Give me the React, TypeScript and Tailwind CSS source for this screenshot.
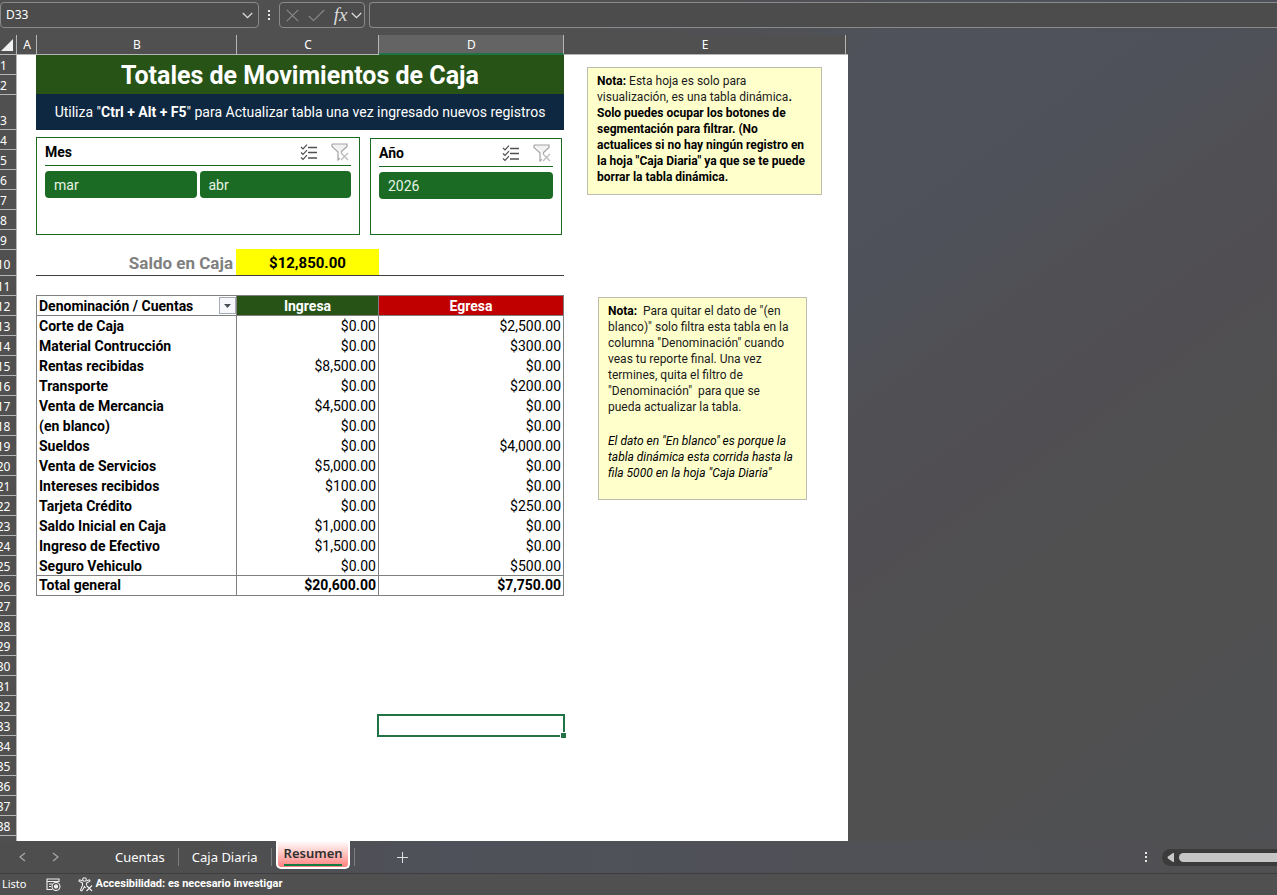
import { useState } from "react";

const UI = "font-['Noto_Sans','Open_Sans',sans-serif]";
const CELL = "font-['Roboto','Liberation_Sans',sans-serif]";

const columns = [
  { name: "A", width: "w-[20px]" },
  { name: "B", width: "w-[200px]" },
  { name: "C", width: "w-[142px]" },
  { name: "D", width: "w-[185px]" },
  { name: "E", width: "w-[282px]" },
];

const rowNumbers = Array.from({ length: 39 }, (_, i) => i + 1);

const cuentas = [
  ["Corte de Caja", "$0.00", "$2,500.00"],
  ["Material Contrucción", "$0.00", "$300.00"],
  ["Rentas recibidas", "$8,500.00", "$0.00"],
  ["Transporte", "$0.00", "$200.00"],
  ["Venta de Mercancia", "$4,500.00", "$0.00"],
  ["(en blanco)", "$0.00", "$0.00"],
  ["Sueldos", "$0.00", "$4,000.00"],
  ["Venta de Servicios", "$5,000.00", "$0.00"],
  ["Intereses recibidos", "$100.00", "$0.00"],
  ["Tarjeta Crédito", "$0.00", "$250.00"],
  ["Saldo Inicial en Caja", "$1,000.00", "$0.00"],
  ["Ingreso de Efectivo", "$1,500.00", "$0.00"],
  ["Seguro Vehiculo", "$0.00", "$500.00"],
];

const rowHeight = (n: number) => {
  if (n === 3) return "h-[35px] items-end";
  if (n === 10) return "h-[26px] items-center pt-[3px]";
  return "h-[20px] items-end";
};

const Chevron = () => (
  <svg width="11" height="7" viewBox="0 0 11 7" fill="none" stroke="currentColor" strokeWidth="1.3">
    <path d="M0.8 1 L5.5 5.6 L10.2 1" />
  </svg>
);

const MultiSelectIcon = () => (
  <svg width="18" height="18" viewBox="0 0 18 18" fill="none" stroke="#505050" strokeWidth="1.2">
    <path d="M1 4 L3 6 L7 1.6 M1 9.5 L3 11.5 L7 7.1 M1 14.5 L3 16.5 L7 12.1" />
    <path d="M8 4.5 H17 M8 9.5 H17 M8 15 H17" strokeWidth="1.4" />
  </svg>
);

const ClearFilterIcon = () => (
  <svg width="18" height="18" viewBox="0 0 18 18" fill="none" stroke="#a3a3a3" strokeWidth="1.2">
    <path d="M1 1 H16 V3.5 L10.5 8.5 V10 M1 1 V3.5 L7 8.8 V17 L9 15.4" fill="#f1f1f1" />
    <path d="M10 10 L17 17 M17 10 L10 17" stroke="#bdbdbd" strokeWidth="1.4" />
  </svg>
);

const Slicer = ({ title, items, className }: { title: string; items: string[]; className: string }) => (
  <section className={`border border-[#1b6a22] bg-white px-[8px] ${className}`}>
    <header className="flex h-[28px] items-center border-b border-[#1b6a22] pr-[2px]">
      <h2 className="flex-1 text-[14px] font-bold leading-[20px]">{title}</h2>
      <button aria-label={`Selección múltiple ${title}`} className="mr-[13px]">
        <MultiSelectIcon />
      </button>
      <button aria-label={`Borrar filtro ${title}`}>
        <ClearFilterIcon />
      </button>
    </header>
    <div className="mt-[5px] flex gap-[3px]">
      {items.map((item) => (
        <button
          key={item}
          className="h-[27px] flex-1 rounded-[4px] bg-[#1b6b24] px-[9px] pt-[2px] text-left text-[14px] text-[#e8f3e6]"
        >
          {item}
        </button>
      ))}
    </div>
  </section>
);

const FormulaBar = () => (
  <div className="flex h-[35px] shrink-0 items-start pt-[2px] text-[#dcdcdc]">
    <div className="flex h-[26px] w-[259px] items-center rounded-[4px] border border-[#8a8a8a] bg-[#4c4c4c] pr-[5px]">
      <input
        aria-label="Cuadro de nombres"
        defaultValue="D33"
        className="min-w-0 flex-1 bg-transparent pl-[5px] text-[12px] text-white outline-none"
      />
      <button aria-label="Abrir nombres">
        <Chevron />
      </button>
    </div>
    <div className="flex h-[26px] w-[20px] flex-col items-center justify-center gap-[2px]">
      <i className="h-[2px] w-[2px] bg-[#e6e6e6]" />
      <i className="h-[2px] w-[2px] bg-[#e6e6e6]" />
      <i className="h-[2px] w-[2px] bg-[#e6e6e6]" />
    </div>
    <div className="flex h-[26px] w-[86px] items-center rounded-[4px] border border-[#8a8a8a] bg-[#4c4c4c] pl-[6px]">
      <button aria-label="Cancelar" className="text-[#8c8c8c]">
        <svg width="13" height="13" viewBox="0 0 13 13" stroke="currentColor" strokeWidth="1.1">
          <path d="M0.8 0.8 L12.2 12.2 M12.2 0.8 L0.8 12.2" />
        </svg>
      </button>
      <button aria-label="Introducir" className="ml-[9px] text-[#8c8c8c]">
        <svg width="17" height="13" viewBox="0 0 17 13" fill="none" stroke="currentColor" strokeWidth="1.1">
          <path d="M0.8 7 L5.5 11.6 L16.2 1" />
        </svg>
      </button>
      <button
        aria-label="Insertar función"
        className="ml-[8px] w-[15px] font-['Liberation_Serif',serif] text-[19px] italic leading-[22px]"
      >
        fx
      </button>
      <button aria-label="Más funciones" className="ml-[3px]">
        <Chevron />
      </button>
    </div>
    <input
      aria-label="Barra de fórmulas"
      className="ml-[4px] h-[26px] min-w-0 flex-1 rounded-l-[4px] border border-r-0 border-[#8a8a8a] bg-[#4c4c4c] px-2 text-[12px] text-white outline-none"
    />
  </div>
);

const ColumnHeaders = () => (
  <div className="flex h-[20px] shrink-0 text-[12px] leading-[19px] text-white">
    <button
      aria-label="Seleccionar todo"
      className="flex w-[17px] items-end justify-end border-r border-b border-[#b5b5b5] bg-[#505050] pr-[3px] pb-[3px]"
    >
      <svg width="12" height="12" viewBox="0 0 12 12" fill="#f2f2f2">
        <path d="M12 0 V12 H0 Z" />
      </svg>
    </button>
    {columns.map(({ name, width }) => (
      <div
        key={name}
        className={`${width} border-r border-[#b5b5b5] pl-[1px] text-center ${
          name === "D" ? "border-b-2 border-b-[#217346] bg-[#646464]" : "border-b bg-[#505050]"
        }`}
      >
        {name}
      </div>
    ))}
    <div className="w-[2px] border-b border-[#b5b5b5] bg-[#505050]" />
  </div>
);

const RowHeaders = () => (
  <div className="w-[17px] shrink-0 overflow-hidden border-r border-[#b5b5b5] bg-[#505050] text-[12px] leading-[17px] text-white">
    {rowNumbers.map((n) => (
      <div key={n} className={`flex justify-end border-b border-[#b5b5b5] ${rowHeight(n)}`}>
        <span className="w-[25px] shrink-0 text-center">{n}</span>
      </div>
    ))}
  </div>
);

const PivotTable = () => (
  <table className="mt-[19px] w-full table-fixed border-separate border-spacing-0 text-[14px] leading-[19px]">
    <thead>
      <tr className="h-[21px]">
        <th className="w-[201px] border border-[#808080] p-0 pl-[2px] text-left font-bold">
          <div className="flex h-[19px] items-center justify-between">
            <span className="pt-[2px]">Denominación / Cuentas</span>
            <button
              aria-label="Filtrar denominación"
              className="flex h-[17px] w-[17px] items-center justify-center border border-[#a5acb5] bg-[#f5f7fa]"
            >
              <svg width="7" height="4" viewBox="0 0 7 4" fill="#4a4f57">
                <path d="M0 0 H7 L3.5 4 Z" />
              </svg>
            </button>
          </div>
        </th>
        <th className="w-[142px] border-y border-r border-[#808080] bg-[#275317] p-0 pt-[2px] leading-[17px] text-white">
          Ingresa
        </th>
        <th className="w-[185px] border-y border-r border-[#808080] bg-[#c00000] p-0 pt-[2px] leading-[17px] text-white">
          Egresa
        </th>
      </tr>
    </thead>
    <tbody>
      {cuentas.map(([cuenta, ingresa, egresa]) => (
        <tr key={cuenta} className="h-[20px] last:leading-[18px] last:*:border-b last:*:pt-[1px]">
          <th scope="row" className="border-x border-[#808080] p-0 pl-[2px] text-left font-bold">
            {cuenta}
          </th>
          <td className="border-r border-[#808080] p-0 pr-[2px] text-right">{ingresa}</td>
          <td className="border-r border-[#808080] p-0 pr-[2px] text-right">{egresa}</td>
        </tr>
      ))}
    </tbody>
    <tfoot>
      <tr className="h-[20px] font-bold">
        <th scope="row" className="border-x border-b border-[#808080] p-0 pl-[2px] text-left">
          Total general
        </th>
        <td className="border-r border-b border-[#808080] p-0 pr-[2px] text-right">$20,600.00</td>
        <td className="border-r border-b border-[#808080] p-0 pr-[2px] text-right">$7,750.00</td>
      </tr>
    </tfoot>
  </table>
);

const Notes = () => (
  <aside className="flex flex-col items-start text-[12px] leading-[16px] text-[#1a1a1a]">
    <p className="mt-[12px] ml-[23px] h-[128px] w-[235px] border border-[#bcbcb0] bg-[#ffffcc] px-[9px] pt-[5px] whitespace-nowrap">
      <b className="text-black">Nota:</b> Esta hoja es solo para
      <br />
      visualización, es una tabla dinámica
      <b className="text-black">
        .<br />
        Solo puedes ocupar los botones de
        <br />
        segmentación para filtrar. (No
        <br />
        actualices si no hay ningún registro en
        <br />
        la hoja "Caja Diaria" ya que se te puede
        <br />
        borrar la tabla dinámica.
      </b>
    </p>
    <div className="mt-[102px] ml-[34px] h-[203px] w-[209px] border border-[#bcbcb0] bg-[#ffffcc] px-[9px] pt-[5px] whitespace-nowrap">
      <p>
        <b className="text-black">Nota:</b>&nbsp; Para quitar el dato de "(en
        <br />
        blanco)" solo filtra esta tabla en la
        <br />
        columna "Denominación" cuando
        <br />
        veas tu reporte final. Una vez
        <br />
        termines, quita el filtro de
        <br />
        "Denominación"&nbsp; para que se
        <br />
        pueda actualizar la tabla.
      </p>
      <p className="mt-[18px] italic text-black">
        El dato en "En blanco" es porque la
        <br />
        tabla dinámica esta corrida hasta la
        <br />
        fila 5000 en la hoja "Caja Diaria"
      </p>
    </div>
  </aside>
);

const SheetTabs = () => {
  const [active, setActive] = useState("Resumen");

  return (
    <nav className="flex h-[32px] shrink-0 items-center bg-linear-to-r from-[#4e4e4e] from-15% via-[#4f515a] via-35% to-[#505052] text-[13px] text-white">
      <button aria-label="Hoja anterior" className="ml-[19px] text-[#a8a8a8]">
        <svg width="7" height="10" viewBox="0 0 7 10" fill="none" stroke="currentColor" strokeWidth="1.2">
          <path d="M6 1 L1 5 L6 9" />
        </svg>
      </button>
      <button aria-label="Hoja siguiente" className="ml-[26px] text-[#a8a8a8]">
        <svg width="7" height="10" viewBox="0 0 7 10" fill="none" stroke="currentColor" strokeWidth="1.2">
          <path d="M1 1 L6 5 L1 9" />
        </svg>
      </button>
      <div className="ml-[43px] flex h-full items-center">
        {["Cuentas", "Caja Diaria", "Resumen"].map((tab) =>
          tab === active ? (
            <button
              key={tab}
              onClick={() => setActive(tab)}
              className="ml-[4px] h-[28px] w-[74px] self-start rounded-b-[5px] border-x-2 border-b-2 border-white bg-linear-to-b from-white to-[#ff8080] px-[6px] font-semibold text-[#303030]"
            >
              <span className="block border-b-2 border-[#107c41] leading-[21px]">{tab}</span>
            </button>
          ) : (
            <button
              key={tab}
              onClick={() => setActive(tab)}
              className="h-[18px] border-r border-[#7d7d7d] px-[13px] leading-[18px]"
            >
              {tab}
            </button>
          )
        )}
        <span className="ml-[4px] h-[18px] border-r border-[#7d7d7d]" />
      </div>
      <button aria-label="Hoja nueva" className="ml-[42px] text-[#e0e0e0]">
        <svg width="11" height="11" viewBox="0 0 11 11" stroke="currentColor" strokeWidth="1">
          <path d="M5.5 0 V11 M0 5.5 H11" />
        </svg>
      </button>
      <div className="ml-auto flex w-[132px] items-center">
        <div className="flex flex-col gap-[2px]">
          <i className="h-[2px] w-[2px] bg-[#e6e6e6]" />
          <i className="h-[2px] w-[2px] bg-[#e6e6e6]" />
          <i className="h-[2px] w-[2px] bg-[#e6e6e6]" />
        </div>
        <div className="ml-[15px] flex h-[17px] flex-1 items-center rounded-l-full bg-[#3b3b3b] pl-[5px]">
          <button aria-label="Desplazar a la izquierda">
            <svg width="7" height="9" viewBox="0 0 7 9" fill="#c8c8c8">
              <path d="M7 0 V9 L6 9 L1 5.5 Q0 4.5 1 3.5 L6 0 Z" />
            </svg>
          </button>
          <div className="ml-[5px] h-[9px] flex-1 rounded-l-full bg-[#c6c6c6]" />
        </div>
      </div>
    </nav>
  );
};

const StatusBar = () => (
  <footer className="flex h-[22px] shrink-0 items-center border-t border-[#3d3d3d] bg-[#505050] pl-[2px] text-[11px] text-white">
    <span>Listo</span>
    <button aria-label="Grabar macro" className="ml-[19px]">
      <svg width="15" height="13" viewBox="0 0 15 13" fill="none" stroke="#f0f0f0" strokeWidth="1.1">
        <path d="M6 11.5 H1 V1 H13 V4 M1 3.5 H13 M3 6 H6 M3 8.5 H5" />
        <circle cx="10" cy="8.5" r="4" />
        <circle cx="10" cy="8.5" r="1.6" fill="#f0f0f0" />
      </svg>
    </button>
    <button className="ml-[17px] flex items-center gap-[3px] font-['Roboto',sans-serif] font-bold">
      <svg width="15" height="15" viewBox="0 0 15 15" fill="none" stroke="#f0f0f0" strokeWidth="1.1">
        <circle cx="6.5" cy="2.5" r="1.8" />
        <path d="M4.5 4 L1.8 2.8 Q0.6 3.2 1.3 4.4 L4.5 6 V8.5 L2.5 13 Q3 14.4 4.2 13.5 L6.5 9.5 L7.5 11 M8.5 4 L11.2 2.8 Q12.4 3.2 11.7 4.4 L8.5 6 V8" />
        <path d="M8.5 8.5 L14 14 M14 8.5 L8.5 14" />
      </svg>
      Accesibilidad: es necesario investigar
    </button>
  </footer>
);

export default function App() {
  return (
    <div
      className={`${UI} flex h-screen flex-col overflow-hidden bg-[linear-gradient(144deg,#505050_0%,#505052_28%,#4f525b_38%,#4e515a_50%,#505054_57%,#504e52_64%,#505050_76%,#4f5053_100%)]`}
    >
      <FormulaBar />
      <ColumnHeaders />
      <main className="flex min-h-0 flex-1">
        <RowHeaders />
        <div className={`${CELL} flex w-[831px] items-start self-stretch bg-white pl-[19px] text-black`}>
          <div className="w-[528px] shrink-0">
            <h1 className="h-[39px] bg-[#275317] text-center text-[25px] font-bold leading-[41px] text-white">
              Totales de Movimientos de Caja
            </h1>
            <p className="h-[36px] bg-[#0e2841] text-center text-[14px] leading-[36px] text-white">
              Utiliza "<b>Ctrl + Alt + F5</b>" para Actualizar tabla una vez ingresado nuevos registros
            </p>
            <div className="mt-[7px] flex items-end gap-[10px]">
              <Slicer title="Mes" items={["mar", "abr"]} className="h-[98px] w-[324px]" />
              <Slicer title="Año" items={["2026"]} className="h-[97px] w-[192px]" />
            </div>
            <div className="mt-[14px] flex h-[27px] border-b border-[#404040] font-bold leading-[28px]">
              <span className="w-[200px] pr-[3px] text-right text-[17px] text-[#808080]">Saldo en Caja</span>
              <span className="w-[143px] bg-[#ffff00] text-center text-[15px]">$12,850.00</span>
            </div>
            <PivotTable />
            {/* celda activa */}
            <div className="relative mt-[118px] ml-[341px] h-[23px] w-[188px] border-2 border-[#217346]">
              <i className="absolute -right-[4px] -bottom-[4px] h-[7px] w-[7px] border border-white bg-[#217346]" />
            </div>
          </div>
          <Notes />
        </div>
      </main>
      <SheetTabs />
      <StatusBar />
    </div>
  );
}
